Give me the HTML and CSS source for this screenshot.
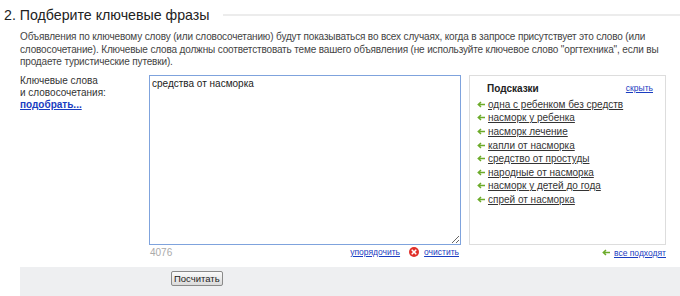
FILE: index.html
```html
<!DOCTYPE html>
<html>
  <head>
    <title>Подберите ключевые фразы</title>
    <link rel="stylesheet" href="styles.css">
  </head>
  <body>
    <div class="step-head">
      <h2 class="step-title">2. Подберите ключевые фразы</h2>
      <div class="step-line"></div>
    </div>

    <p class="intro">
      Объявления по ключевому слову (или словосочетанию) будут показываться во всех случаях, когда в запросе присутствует это слово (или<br>
      словосочетание). Ключевые слова должны соответствовать теме вашего объявления (не используйте ключевое слово "оргтехника", если вы<br>
      продаете туристические путевки).
    </p>

    <div class="phrases">
      <div class="phrases-label">
        Ключевые слова<br>
        и словосочетания:<br>
        <a href="#" class="pick-link">подобрать...</a>
      </div>

      <div class="phrases-input">
        <textarea class="phrases-text">средства от насморка</textarea>
        <div class="phrases-meta">
          <span class="counter">4076</span>
          <a href="#" class="small-link">упорядочить</a>
          <span class="clear">
            <svg class="clear-icon" width="10" height="10" viewBox="0 0 10 10">
              <circle cx="5" cy="5" r="5" fill="#e0302a"/>
              <path d="M3.2 3.2l3.6 3.6M6.8 3.2l-3.6 3.6" stroke="#fff" stroke-width="1.6" stroke-linecap="round"/>
            </svg>
            <a href="#" class="small-link">очистить</a>
          </span>
        </div>
      </div>

      <div class="hints-col">
        <div class="hints">
          <div class="hints-head">
            <span class="hints-title">Подсказки</span>
            <a href="#" class="small-link">скрыть</a>
          </div>
          <ul class="hint-list">
            <li><svg class="arrow" width="8" height="7" viewBox="0 0 8 7"><path d="M8 3.5H1.5M4 1L1.3 3.5 4 6" fill="none" stroke="#6cab2a" stroke-width="1.5"/></svg><a href="#">одна с ребенком без средств</a></li>
            <li><svg class="arrow" width="8" height="7" viewBox="0 0 8 7"><path d="M8 3.5H1.5M4 1L1.3 3.5 4 6" fill="none" stroke="#6cab2a" stroke-width="1.5"/></svg><a href="#">насморк у ребенка</a></li>
            <li><svg class="arrow" width="8" height="7" viewBox="0 0 8 7"><path d="M8 3.5H1.5M4 1L1.3 3.5 4 6" fill="none" stroke="#6cab2a" stroke-width="1.5"/></svg><a href="#">насморк лечение</a></li>
            <li><svg class="arrow" width="8" height="7" viewBox="0 0 8 7"><path d="M8 3.5H1.5M4 1L1.3 3.5 4 6" fill="none" stroke="#6cab2a" stroke-width="1.5"/></svg><a href="#">капли от насморка</a></li>
            <li><svg class="arrow" width="8" height="7" viewBox="0 0 8 7"><path d="M8 3.5H1.5M4 1L1.3 3.5 4 6" fill="none" stroke="#6cab2a" stroke-width="1.5"/></svg><a href="#">средство от простуды</a></li>
            <li><svg class="arrow" width="8" height="7" viewBox="0 0 8 7"><path d="M8 3.5H1.5M4 1L1.3 3.5 4 6" fill="none" stroke="#6cab2a" stroke-width="1.5"/></svg><a href="#">народные от насморка</a></li>
            <li><svg class="arrow" width="8" height="7" viewBox="0 0 8 7"><path d="M8 3.5H1.5M4 1L1.3 3.5 4 6" fill="none" stroke="#6cab2a" stroke-width="1.5"/></svg><a href="#">насморк у детей до года</a></li>
            <li><svg class="arrow" width="8" height="7" viewBox="0 0 8 7"><path d="M8 3.5H1.5M4 1L1.3 3.5 4 6" fill="none" stroke="#6cab2a" stroke-width="1.5"/></svg><a href="#">спрей от насморка</a></li>
          </ul>
        </div>
        <div class="all-fit">
          <svg class="arrow" width="8" height="7" viewBox="0 0 8 7"><path d="M8 3.5H1.5M4 1L1.3 3.5 4 6" fill="none" stroke="#6cab2a" stroke-width="1.5"/></svg>
          <a href="#" class="small-link">все подходят</a>
        </div>
      </div>
    </div>

    <div class="actions">
      <button class="calc-btn">Посчитать</button>
    </div>
  </body>
</html>
```

FILE: styles.css
```css
body {
  margin: 0;
  font-family: "Liberation Sans", Arial, sans-serif;
  font-size: 10px;
  color: #333;
  background: #fff;
  overflow: hidden;
}

a {
  color: #1a3dc1;
}

.step-head {
  display: flex;
  align-items: center;
  height: 30px;
  padding-left: 4px;
}

.step-title {
  margin: 0;
  font-size: 14.2px;
  font-weight: normal;
  color: #222;
}

.step-line {
  flex: 1;
  height: 0;
  margin-left: 13px;
  border-top: 2px solid #ececec;
}

.intro {
  margin: 0;
  padding: 1px 0 0 20px;
  line-height: 12.5px;
  letter-spacing: -0.15px;
  color: #444;
}

.phrases {
  display: grid;
  grid-template-columns: 121px 312px 197px;
  column-gap: 8px;
  padding: 6px 0 0 20px;
}

.phrases-label {
  line-height: 12px;
}

.pick-link {
  font-weight: bold;
}

.phrases-text {
  display: block;
  box-sizing: border-box;
  width: 312px;
  height: 170px;
  margin: 0;
  padding: 2px 2px;
  border: 1px solid #7fa3dd;
  font-family: "Liberation Sans", Arial, sans-serif;
  font-size: 10px;
  color: #222;
  outline: none;
}

.phrases-meta {
  display: flex;
  align-items: center;
  height: 13px;
  padding-top: 1px;
}

.counter {
  flex: 1;
  color: #aaa;
  padding-left: 1px;
}

.small-link {
  font-size: 8.5px;
}

.clear {
  display: flex;
  align-items: center;
  gap: 5px;
  margin-left: 9px;
  margin-right: 2px;
}

.hints {
  box-sizing: border-box;
  height: 170px;
  border: 1px solid #ddd;
  padding: 6px 12px 0 7px;
}

.hints-head {
  display: flex;
  justify-content: space-between;
  align-items: center;
  padding-left: 10px;
  height: 13px;
}

.hints-title {
  font-weight: bold;
  color: #222;
}

.hint-list {
  list-style: none;
  margin: 3px 0 0;
  padding: 0;
}

.hint-list li {
  display: flex;
  align-items: center;
  gap: 3px;
  height: 13.6px;
}

.hint-list a {
  color: #333;
}

.all-fit {
  display: flex;
  align-items: center;
  justify-content: flex-end;
  gap: 4px;
  margin-top: 2px;
  height: 12px;
}

.actions {
  margin: 8px 0 0 20px;
  padding: 4px 0 0 151px;
  background: #eeeff1;
  height: 30px;
}

.calc-btn {
  font-family: "Liberation Sans", Arial, sans-serif;
  font-size: 9.5px;
  color: #222;
  height: 15px;
  padding: 0 2px;
  border: 1px solid #8a8a8a;
  border-radius: 2px;
  background: linear-gradient(#fbfbfb, #dadada);
}
```
